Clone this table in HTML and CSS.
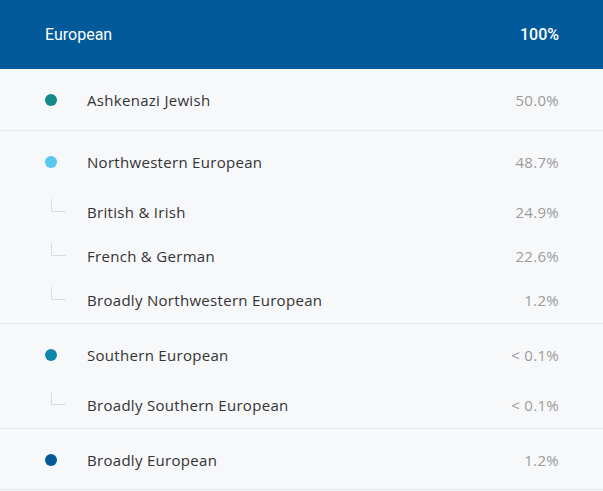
FILE: index.html
```html
<!DOCTYPE html>
<html lang="en">
<head>
<meta charset="utf-8">
<title>European ancestry</title>
<link rel="stylesheet" href="styles.css">
</head>
<body>
<div class="panel">
  <div class="header">
    <span class="name">European</span>
    <span class="pct">100%</span>
  </div>

  <div class="single">
    <span class="dot dot-ashk"></span>
    <span class="label">Ashkenazi Jewish</span>
    <span class="value">50.0%</span>
  </div>

  <div class="group">
    <div class="main">
      <span class="dot dot-nw"></span>
      <span class="label">Northwestern European</span>
      <span class="value">48.7%</span>
    </div>
    <div class="subs">
      <div class="sub">
        <span class="branch"></span>
        <span class="label">British &amp; Irish</span>
        <span class="value">24.9%</span>
      </div>
      <div class="sub">
        <span class="branch"></span>
        <span class="label">French &amp; German</span>
        <span class="value">22.6%</span>
      </div>
      <div class="sub">
        <span class="branch"></span>
        <span class="label">Broadly Northwestern European</span>
        <span class="value">1.2%</span>
      </div>
    </div>
  </div>

  <div class="group">
    <div class="main">
      <span class="dot dot-south"></span>
      <span class="label">Southern European</span>
      <span class="value">&lt; 0.1%</span>
    </div>
    <div class="subs">
      <div class="sub">
        <span class="branch"></span>
        <span class="label">Broadly Southern European</span>
        <span class="value">&lt; 0.1%</span>
      </div>
    </div>
  </div>

  <div class="single last">
    <span class="dot dot-broad"></span>
    <span class="label">Broadly European</span>
    <span class="value">1.2%</span>
  </div>
</div>
</body>
</html>
```
FILE: styles.css
```css
html, body {
  margin: 0;
  padding: 0;
  background: #f7f8fa;
}
body {
  font-family: "Open Sans", "Lato", sans-serif;
  color: #333;
}
.panel {
  width: 603px;
}
.header {
  height: 69px;
  background: #035a9a;
  color: #fff;
  display: flex;
  align-items: center;
  justify-content: space-between;
  padding: 0 44px 1px 45px;
  box-sizing: border-box;
  font-family: "Roboto", "Liberation Sans", sans-serif;
  font-size: 16px;
  font-weight: 400;
}
.header .pct {
  font-weight: 500;
}
.single {
  height: 61px;
  display: flex;
  align-items: center;
  padding: 1px 44px 0 45px;
  box-sizing: border-box;
  height: 62px;
  border-bottom: 1px solid #e6e8eb;
}
.single.last {
  height: 61px;
}
.group {
  padding: 9px 0 1px;
  border-bottom: 1px solid #e6e8eb;
}
.main, .sub {
  height: 44px;
  display: flex;
  align-items: center;
  padding: 0 44px 0 45px;
}
.subs {
  margin-top: 6px;
}
.dot {
  width: 12px;
  height: 12px;
  border-radius: 50%;
  flex: none;
  margin-right: 30px;
}
.dot-ashk { background: #138a88; }
.dot-nw { background: #59c8ef; }
.dot-south { background: #0f87ad; }
.dot-broad { background: #03599a; }
.branch {
  width: 15px;
  height: 13px;
  flex: none;
  box-sizing: border-box;
  margin-left: 6px;
  margin-right: 21px;
  border-left: 1px solid #d8dbdf;
  border-bottom: 1px solid #d8dbdf;
  align-self: flex-start;
  margin-top: 9px;
}
.label {
  flex: 1;
  font-size: 15px;
  letter-spacing: 0.3px;
  color: #333;
}
.value {
  font-size: 15px;
  letter-spacing: 0.3px;
  color: #9b9b9b;
}
```
